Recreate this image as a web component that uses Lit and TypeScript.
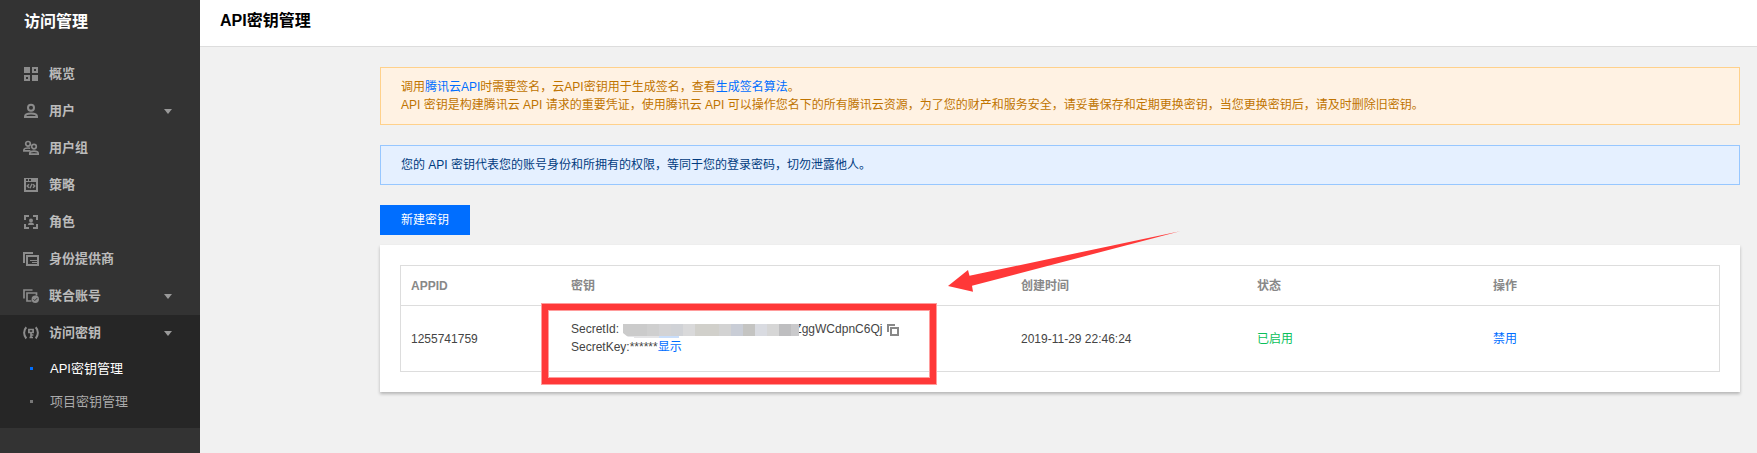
import { LitElement, html, svg, css, nothing } from "lit";
import type { SVGTemplateResult } from "lit";
import { customElement } from "lit/decorators.js";
import { classMap } from "lit/directives/class-map.js";

const FONT = css`"Liberation Sans", "Noto Sans CJK SC", sans-serif`;

const ICONS: Record<string, SVGTemplateResult> = {
  overview: svg`
    <path fill="currentColor" d="M1 1h6v6H1zM9 9h6v6H9z"/>
    <path fill="currentColor" fill-rule="evenodd" d="M9 1h6v6H9zM11 3v2h2V3zM1 9h6v6H1zM3 11v2h2v-2z"/>`,
  user: svg`
    <g fill="none" stroke="currentColor" stroke-width="2">
      <circle cx="8" cy="4.8" r="3"/>
      <path d="M2 14v-.6C2 11.200 5 10.400 8 10.400s6 .8 6 3v.6z"/>
    </g>`,
  group: svg`
    <g fill="none" stroke="currentColor" stroke-width="1.7">
      <circle cx="5" cy="3.800" r="2.3"/>
      <path d="M7.500 10.800H.9v-.7C.9 8.700 3 8 5 8c.8 0 1.500.1 2.200.3"/>
      <circle cx="11" cy="6.600" r="2.300"/>
      <path d="M6.800 14.200v-.6c0-1.600 2-2.400 4.200-2.400s4.200.8 4.200 2.400v.6z"/>
    </g>`,
  policy: svg`
    <path fill="currentColor" fill-rule="evenodd" d="M1 1h14v14H1zM3 5v8h10V5zM3 2v2h2V2zM6 2v2h2V2z"/>
    <path fill="none" stroke="currentColor" stroke-width="1.400" d="M6 7.200 4.200 9 6 10.800M10 7.200 11.800 9 10 10.800M9 6.800 7 11.200"/>`,
  role: svg`
    <path fill="none" stroke="currentColor" stroke-width="2" d="M6 2H2v4M10 2h4v4M6 14H2v-4M10 14h4v-4"/>
    <circle cx="8" cy="6.500" r="2" fill="currentColor"/>
    <path fill="currentColor" d="M5 11c0-2 1.500-2.600 3-2.600s3 .6 3 2.600z"/>`,
  provider: svg`
    <path fill="none" stroke="currentColor" stroke-width="2" d="M10 2H1v10"/>
    <path fill="currentColor" fill-rule="evenodd" d="M3 4h13v11H3zM5 6v7h9v-1H9v-1h5v-1H7V9h7V6z"/>`,
  union: svg`
    <path fill="none" stroke="currentColor" stroke-width="1.700" d="M9.500 2H1v8.500M8.500 13H4V5h9.500v2.500"/>
    <circle cx="12.300" cy="11.300" r="3.700" fill="currentColor"/>
    <path fill="none" stroke="#333" stroke-width="1" d="m10.500 11.300 1.300 1.300 2.400-2.500"/>`,
  key: svg`
    <g fill="none" stroke="currentColor" stroke-width="2">
      <path d="M3.300 2.200C.4 5.200.4 10.200 3.300 13.500M12.700 2.200c2.900 3 2.900 8 0 11.300"/>
      <path stroke-width="1.700" d="M5.900 4.500h4.200v3H5.900z"/>
      <path stroke-width="1.700" d="M8 7.500v5.500M8 10h2.400M6.500 12.500h3.500"/>
    </g>`,
};

interface NavItem {
  icon: string;
  label: string;
  expandable?: boolean;
}

const NAV: NavItem[] = [
  { icon: "overview", label: "概览" },
  { icon: "user", label: "用户", expandable: true },
  { icon: "group", label: "用户组" },
  { icon: "policy", label: "策略" },
  { icon: "role", label: "角色" },
  { icon: "provider", label: "身份提供商" },
  { icon: "union", label: "联合账号", expandable: true },
];

const SUB_NAV = [
  { label: "API密钥管理", current: true },
  { label: "项目密钥管理", current: false },
];

@customElement("side-nav")
export class SideNav extends LitElement {
  static styles = css`
    :host {
      display: block;
      background: #333;
      color: #bbb;
      font-family: ${FONT};
    }
    .title {
      margin: 0;
      padding: 10px 24px 22px;
      color: #fff;
      font-size: 16px;
      line-height: 24px;
    }
    .list {
      margin: 0;
      padding: 0;
      list-style: none;
    }
    .item {
      box-sizing: border-box;
      display: flex;
      align-items: center;
      gap: 10px;
      width: 100%;
      height: 37px;
      padding: 0 28px 1px 23px;
      border: 0;
      background: none;
      color: inherit;
      font: bold 13px/20px ${FONT};
      text-align: left;
      text-decoration: none;
    }
    .icon {
      flex: none;
      width: 16px;
      height: 16px;
      color: #8c8c8c;
    }
    .label {
      flex: 1;
    }
    .caret {
      width: 8px;
      height: 6px;
      color: #999;
    }
    .group {
      padding-bottom: 10px;
      background: #262626;
    }
    .sub {
      display: flex;
      align-items: center;
      gap: 17px;
      height: 33px;
      padding-left: 30px;
      color: #aaa;
      font-size: 13px;
      line-height: 19px;
      text-decoration: none;
    }
    .sub::before {
      content: "";
      width: 3px;
      height: 3px;
      background: #777;
    }
    .sub.current {
      color: #fff;
    }
    .sub.current::before {
      background: #006eff;
    }
  `;

  private content(item: NavItem) {
    return html`
      <svg class="icon" viewBox="0 0 16 16" aria-hidden="true">${ICONS[item.icon]}</svg>
      <span class="label">${item.label}</span>
      ${item.expandable
        ? html`<svg class="caret" viewBox="0 0 8 6" aria-hidden="true"><path fill="currentColor" d="M0 1h8L4 6z"/></svg>`
        : nothing}
    `;
  }

  private row(item: NavItem, open = false) {
    return item.expandable
      ? html`<button class="item" type="button" aria-expanded=${open}>${this.content(item)}</button>`
      : html`<a class="item" href="#">${this.content(item)}</a>`;
  }

  render() {
    return html`
      <h2 class="title">访问管理</h2>
      <nav>
        <ul class="list">
          ${NAV.map((item) => html`<li>${this.row(item)}</li>`)}
          <li class="group">
            ${this.row({ icon: "key", label: "访问密钥", expandable: true }, true)}
            <ul class="list">
              ${SUB_NAV.map(
                (s) => html`<li><a href="#" class=${classMap({ sub: true, current: s.current })}>${s.label}</a></li>`
              )}
            </ul>
          </li>
        </ul>
      </nav>
    `;
  }
}

/* Blocks that hide the first part of the secret id: x, width, colour */
const MOSAIC: [number, number, string][] = [
  [0, 25, "#cbcbcb"],
  [25, 12, "#cfcfcf"],
  [37, 12, "#d3d3d5"],
  [49, 12, "#d0d2d6"],
  [61, 12, "#d9d9da"],
  [73, 24, "#d1d0cb"],
  [97, 12, "#d3d3d3"],
  [109, 12, "#c9cdd6"],
  [121, 12, "#c4c4c2"],
  [133, 12, "#d9dbe1"],
  [145, 12, "#d6d6d6"],
  [157, 12, "#bebec0"],
  [169, 8, "#c9c9cb"],
];

@customElement("secret-cell")
export class SecretCell extends LitElement {
  static styles = css`
    :host {
      display: block;
      position: relative;
      white-space: nowrap;
    }
    .row {
      height: 18px;
    }
    .mosaic {
      position: relative;
      width: 177px;
      height: 14px;
      margin-right: -5px;
      vertical-align: -5px;
    }
    .copy {
      margin: 0 0 0 5px;
      padding: 0;
      border: 0;
      background: none;
      color: #888;
      line-height: 0;
      vertical-align: -3px;
    }
    .link {
      color: #006eff;
      text-decoration: none;
    }
    .frame {
      position: absolute;
      top: -16px;
      left: -29px;
      width: 382px;
      height: 68px;
      border: 6px solid #ff3838;
      box-shadow: 0 0 0 1px #ff9c9c, inset 0 0 0 1px #ff9c9c;
      pointer-events: none;
    }
    .arrow {
      position: absolute;
      top: -89px;
      left: 377px;
      pointer-events: none;
    }
  `;

  render() {
    return html`
      <div class="row">SecretId: <svg class="mosaic" viewBox="0 0 177 14" role="img" aria-label="***">
          <defs><clipPath id="m"><path d="M1 0H177V12H75V13H60V14H12V13H6L1 9z"/></clipPath></defs>
          <g clip-path="url(#m)">
            ${MOSAIC.map(([x, w, c]) => svg`<rect x=${x} y="0" width=${w} height="12" fill=${c}/>`)}
            <path fill="#e4e4e6" d="M5 12h32v2H5z"/><path fill="#c9defb" d="M37 12h20v2H37z"/>
          </g>
        </svg>ZggWCdpnC6Qj<button class="copy" type="button" aria-label="复制">
          <svg width="12" height="12" viewBox="0 0 12 12"><path fill="currentColor" fill-rule="evenodd" d="M0 0h8v2H2v6H0zM3 3h9v9H3zM5 5v5h5V5z"/></svg>
        </button></div>
      <div class="row">SecretKey:******<a class="link" href="#">显示</a></div>
      <div class="frame"></div>
      <svg class="arrow" width="232" height="62" viewBox="0 0 232 62" aria-hidden="true">
        <path fill="#ff3838" d="M0 55 20 39 21.500 44.700 232 0.300 24 54.700 25 60.700z"/>
      </svg>
    `;
  }
}

@customElement("app-root")
export class AppRoot extends LitElement {
  static styles = css`
    :host {
      display: grid;
      grid-template-columns: 200px 1fr;
      min-height: 100vh;
      background: #f1f1f1;
      color: #444;
      font: 12px/18px ${FONT};
    }
    .header {
      padding: 9px 20px 13px;
      border-bottom: 1px solid #ddd;
      background: #fff;
    }
    .heading {
      margin: 0;
      color: #000;
      font-size: 16px;
      line-height: 24px;
    }
    .content {
      padding: 20px 17px 20px 180px;
    }
    .alert {
      margin-bottom: 20px;
      padding: 10px 20px;
      border: 1px solid #97c7ff;
      background: #e5f0ff;
      color: #003b80;
    }
    .alert.warning {
      border-color: #ffd18b;
      background: #fff2e3;
      color: #c07400;
    }
    .line {
      margin: 0;
    }
    .link {
      color: #006eff;
      text-decoration: none;
    }
    .create {
      display: block;
      height: 30px;
      margin-bottom: 10px;
      padding: 0 21px;
      border: 0;
      background: #006eff;
      color: #fff;
      font: 12px/30px ${FONT};
    }
    .card {
      padding: 20px;
      background: #fff;
      box-shadow: 0 2px 3px rgba(0, 0, 0, 0.25);
    }
    .table {
      width: 100%;
      border: 1px solid #ddd;
      border-spacing: 0;
      table-layout: fixed;
    }
    .c-id {
      width: 160px;
    }
    .c-key {
      width: 450px;
    }
    .th,
    .td {
      padding: 0 10px;
      text-align: left;
      vertical-align: middle;
    }
    .th {
      height: 39px;
      border-bottom: 1px solid #ddd;
      color: #888;
    }
    .td {
      height: 65px;
    }
    .td.secret {
      height: 51px;
      padding-top: 14px;
      vertical-align: top;
    }
    .ok {
      color: #0abf5b;
    }
  `;

  render() {
    return html`
      <side-nav></side-nav>
      <main>
        <header class="header"><h1 class="heading">API密钥管理</h1></header>
        <div class="content">
          <div class="alert warning">
            <p class="line">调用<a class="link" href="#">腾讯云API</a>时需要签名，云API密钥用于生成签名，查看<a class="link" href="#">生成签名算法</a>。</p>
            <p class="line">API 密钥是构建腾讯云 API 请求的重要凭证，使用腾讯云 API 可以操作您名下的所有腾讯云资源，为了您的财产和服务安全，请妥善保存和定期更换密钥，当您更换密钥后，请及时删除旧密钥。</p>
          </div>
          <div class="alert">
            <p class="line">您的 API 密钥代表您的账号身份和所拥有的权限，等同于您的登录密码，切勿泄露他人。</p>
          </div>
          <button class="create" type="button">新建密钥</button>
          <section class="card">
            <table class="table">
              <colgroup><col class="c-id" /><col class="c-key" /><col /><col /><col /></colgroup>
              <thead>
                <tr>
                  ${["APPID", "密钥", "创建时间", "状态", "操作"].map((t) => html`<th class="th" scope="col">${t}</th>`)}
                </tr>
              </thead>
              <tbody>
                <tr>
                  <td class="td">1255741759</td>
                  <td class="td secret"><secret-cell></secret-cell></td>
                  <td class="td">2019-11-29 22:46:24</td>
                  <td class="td ok">已启用</td>
                  <td class="td"><a class="link" href="#">禁用</a></td>
                </tr>
              </tbody>
            </table>
          </section>
        </div>
      </main>
    `;
  }
}
